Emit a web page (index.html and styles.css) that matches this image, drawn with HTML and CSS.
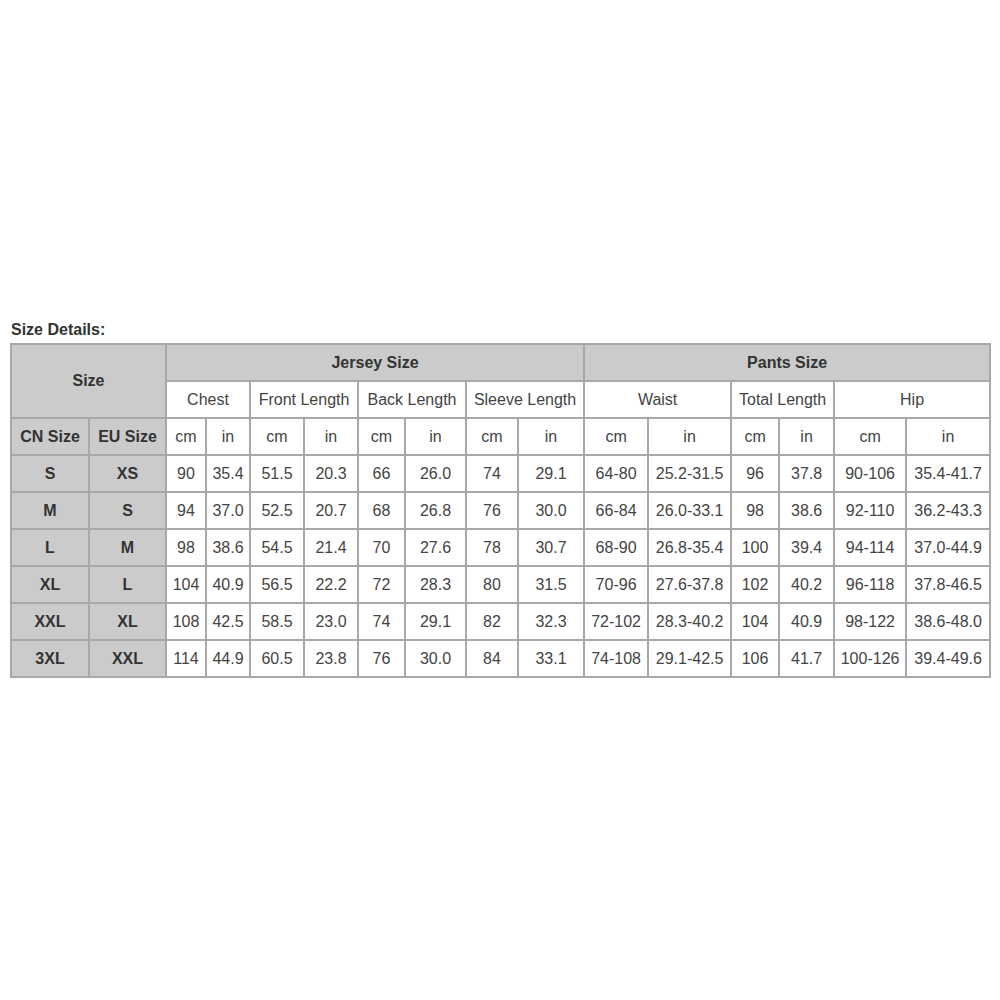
FILE: index.html
```html
<!DOCTYPE html>
<html>
<head>
<meta charset="utf-8">
<link rel="stylesheet" href="styles.css">
</head>
<body>
<div class="page">
  <div class="title">Size Details:</div>
  <table class="sizes">
    <colgroup>
      <col style="width:78px"><col style="width:77px">
      <col style="width:40px"><col style="width:44px">
      <col style="width:54px"><col style="width:54px">
      <col style="width:47px"><col style="width:61px">
      <col style="width:52px"><col style="width:66px">
      <col style="width:64px"><col style="width:83px">
      <col style="width:48px"><col style="width:55px">
      <col style="width:72px"><col style="width:84px">
    </colgroup>
    <tr>
      <th class="hd" colspan="2" rowspan="2">Size</th>
      <th class="hd" colspan="8">Jersey Size</th>
      <th class="hd" colspan="6">Pants Size</th>
    </tr>
    <tr>
      <td colspan="2">Chest</td>
      <td colspan="2">Front Length</td>
      <td colspan="2">Back Length</td>
      <td colspan="2">Sleeve Length</td>
      <td colspan="2">Waist</td>
      <td colspan="2">Total Length</td>
      <td colspan="2">Hip</td>
    </tr>
    <tr>
      <th class="hd">CN Size</th><th class="hd">EU Size</th>
      <td>cm</td><td>in</td><td>cm</td><td>in</td><td>cm</td><td>in</td><td>cm</td><td>in</td>
      <td>cm</td><td>in</td><td>cm</td><td>in</td><td>cm</td><td>in</td>
    </tr>
    <tr>
      <th class="hd">S</th><th class="hd">XS</th>
      <td>90</td><td>35.4</td><td>51.5</td><td>20.3</td><td>66</td><td>26.0</td><td>74</td><td>29.1</td>
      <td>64-80</td><td>25.2-31.5</td><td>96</td><td>37.8</td><td>90-106</td><td>35.4-41.7</td>
    </tr>
    <tr>
      <th class="hd">M</th><th class="hd">S</th>
      <td>94</td><td>37.0</td><td>52.5</td><td>20.7</td><td>68</td><td>26.8</td><td>76</td><td>30.0</td>
      <td>66-84</td><td>26.0-33.1</td><td>98</td><td>38.6</td><td>92-110</td><td>36.2-43.3</td>
    </tr>
    <tr>
      <th class="hd">L</th><th class="hd">M</th>
      <td>98</td><td>38.6</td><td>54.5</td><td>21.4</td><td>70</td><td>27.6</td><td>78</td><td>30.7</td>
      <td>68-90</td><td>26.8-35.4</td><td>100</td><td>39.4</td><td>94-114</td><td>37.0-44.9</td>
    </tr>
    <tr>
      <th class="hd">XL</th><th class="hd">L</th>
      <td>104</td><td>40.9</td><td>56.5</td><td>22.2</td><td>72</td><td>28.3</td><td>80</td><td>31.5</td>
      <td>70-96</td><td>27.6-37.8</td><td>102</td><td>40.2</td><td>96-118</td><td>37.8-46.5</td>
    </tr>
    <tr>
      <th class="hd">XXL</th><th class="hd">XL</th>
      <td>108</td><td>42.5</td><td>58.5</td><td>23.0</td><td>74</td><td>29.1</td><td>82</td><td>32.3</td>
      <td>72-102</td><td>28.3-40.2</td><td>104</td><td>40.9</td><td>98-122</td><td>38.6-48.0</td>
    </tr>
    <tr>
      <th class="hd">3XL</th><th class="hd">XXL</th>
      <td>114</td><td>44.9</td><td>60.5</td><td>23.8</td><td>76</td><td>30.0</td><td>84</td><td>33.1</td>
      <td>74-108</td><td>29.1-42.5</td><td>106</td><td>41.7</td><td>100-126</td><td>39.4-49.6</td>
    </tr>
  </table>
</div>
</body>
</html>
```
FILE: styles.css
```css
html, body {
  margin: 0;
  padding: 0;
  background: #ffffff;
}
.page {
  padding: 320px 9px 0 10px;
  font-family: "Liberation Sans", Arial, sans-serif;
}
.title {
  font-size: 16px;
  font-weight: bold;
  color: #333333;
  padding-left: 1px;
  height: 23px;
  line-height: 19px;
}
.sizes {
  border-collapse: collapse;
  table-layout: fixed;
  width: 981px;
  border: 2px solid #a3a3a3;
}
.sizes td, .sizes th {
  border: 2px solid #a8a8a8;
  height: 35px;
  padding: 0;
  text-align: center;
  font-size: 16px;
  color: #444444;
  white-space: nowrap;
  overflow: hidden;
}
.sizes th.hd {
  background: #cbcbcb;
  font-weight: bold;
  color: #333333;
}
```
